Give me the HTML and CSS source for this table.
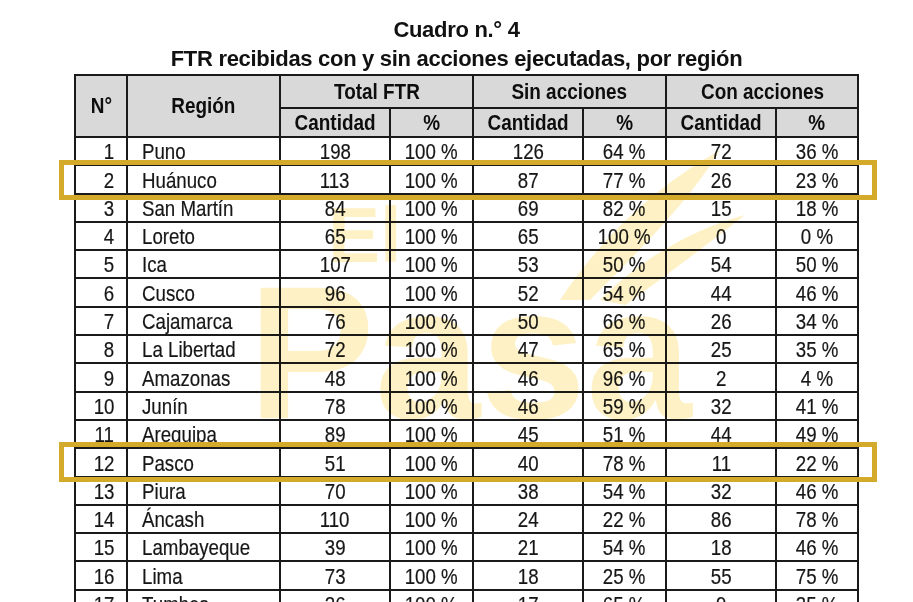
FILE: index.html
```html
<!DOCTYPE html>
<html lang="es">
<head>
<meta charset="utf-8">
<title>Cuadro n.° 4</title>
<link rel="stylesheet" href="styles.css">
</head>
<body>
<div class="page">
  <div class="titles">
    <div class="title">Cuadro n.° 4</div>
    <div class="subtitle">FTR recibidas con y sin acciones ejecutadas, por región</div>
  </div>
  <table class="grid">
    <colgroup>
      <col class="c-n"><col class="c-reg"><col class="c-q"><col class="c-p"><col class="c-q"><col class="c-p"><col class="c-q"><col class="c-p2">
    </colgroup>
    <thead>
      <tr class="h1">
        <th rowspan="2"><span>N°</span></th>
        <th rowspan="2"><span>Región</span></th>
        <th colspan="2"><span>Total FTR</span></th>
        <th colspan="2"><span>Sin acciones</span></th>
        <th colspan="2"><span>Con acciones</span></th>
      </tr>
      <tr class="h2">
        <th><span>Cantidad</span></th><th><span>%</span></th><th><span>Cantidad</span></th><th><span>%</span></th><th><span>Cantidad</span></th><th><span>%</span></th>
      </tr>
    </thead>
    <tbody>
      <tr><td class="n"><span>1</span></td><td class="r"><span>Puno</span></td><td><span>198</span></td><td><span>100 %</span></td><td><span>126</span></td><td><span>64 %</span></td><td><span>72</span></td><td><span>36 %</span></td></tr>
      <tr><td class="n"><span>2</span></td><td class="r"><span>Huánuco</span></td><td><span>113</span></td><td><span>100 %</span></td><td><span>87</span></td><td><span>77 %</span></td><td><span>26</span></td><td><span>23 %</span></td></tr>
      <tr><td class="n"><span>3</span></td><td class="r"><span>San Martín</span></td><td><span>84</span></td><td><span>100 %</span></td><td><span>69</span></td><td><span>82 %</span></td><td><span>15</span></td><td><span>18 %</span></td></tr>
      <tr><td class="n"><span>4</span></td><td class="r"><span>Loreto</span></td><td><span>65</span></td><td><span>100 %</span></td><td><span>65</span></td><td><span>100 %</span></td><td><span>0</span></td><td><span>0 %</span></td></tr>
      <tr><td class="n"><span>5</span></td><td class="r"><span>Ica</span></td><td><span>107</span></td><td><span>100 %</span></td><td><span>53</span></td><td><span>50 %</span></td><td><span>54</span></td><td><span>50 %</span></td></tr>
      <tr><td class="n"><span>6</span></td><td class="r"><span>Cusco</span></td><td><span>96</span></td><td><span>100 %</span></td><td><span>52</span></td><td><span>54 %</span></td><td><span>44</span></td><td><span>46 %</span></td></tr>
      <tr><td class="n"><span>7</span></td><td class="r"><span>Cajamarca</span></td><td><span>76</span></td><td><span>100 %</span></td><td><span>50</span></td><td><span>66 %</span></td><td><span>26</span></td><td><span>34 %</span></td></tr>
      <tr><td class="n"><span>8</span></td><td class="r"><span>La Libertad</span></td><td><span>72</span></td><td><span>100 %</span></td><td><span>47</span></td><td><span>65 %</span></td><td><span>25</span></td><td><span>35 %</span></td></tr>
      <tr><td class="n"><span>9</span></td><td class="r"><span>Amazonas</span></td><td><span>48</span></td><td><span>100 %</span></td><td><span>46</span></td><td><span>96 %</span></td><td><span>2</span></td><td><span>4 %</span></td></tr>
      <tr><td class="n"><span>10</span></td><td class="r"><span>Junín</span></td><td><span>78</span></td><td><span>100 %</span></td><td><span>46</span></td><td><span>59 %</span></td><td><span>32</span></td><td><span>41 %</span></td></tr>
      <tr><td class="n"><span>11</span></td><td class="r"><span>Arequipa</span></td><td><span>89</span></td><td><span>100 %</span></td><td><span>45</span></td><td><span>51 %</span></td><td><span>44</span></td><td><span>49 %</span></td></tr>
      <tr><td class="n"><span>12</span></td><td class="r"><span>Pasco</span></td><td><span>51</span></td><td><span>100 %</span></td><td><span>40</span></td><td><span>78 %</span></td><td><span>11</span></td><td><span>22 %</span></td></tr>
      <tr><td class="n"><span>13</span></td><td class="r"><span>Piura</span></td><td><span>70</span></td><td><span>100 %</span></td><td><span>38</span></td><td><span>54 %</span></td><td><span>32</span></td><td><span>46 %</span></td></tr>
      <tr><td class="n"><span>14</span></td><td class="r"><span>Áncash</span></td><td><span>110</span></td><td><span>100 %</span></td><td><span>24</span></td><td><span>22 %</span></td><td><span>86</span></td><td><span>78 %</span></td></tr>
      <tr><td class="n"><span>15</span></td><td class="r"><span>Lambayeque</span></td><td><span>39</span></td><td><span>100 %</span></td><td><span>21</span></td><td><span>54 %</span></td><td><span>18</span></td><td><span>46 %</span></td></tr>
      <tr><td class="n"><span>16</span></td><td class="r"><span>Lima</span></td><td><span>73</span></td><td><span>100 %</span></td><td><span>18</span></td><td><span>25 %</span></td><td><span>55</span></td><td><span>75 %</span></td></tr>
      <tr><td class="n"><span>17</span></td><td class="r"><span>Tumbes</span></td><td><span>26</span></td><td><span>100 %</span></td><td><span>17</span></td><td><span>65 %</span></td><td><span>9</span></td><td><span>35 %</span></td></tr>
    </tbody>
  </table>

  <svg class="watermark" width="913" height="602" viewBox="0 0 913 602" aria-hidden="true">
    <g fill="#f8cf3c">
      <text x="328" y="262" class="wm-el">El</text>
      <text x="248" y="418" class="wm-big">Pasa</text>
      <path d="M560 300 C600 240 650 190 720 150 C690 200 640 250 590 300 Z"/>
      <path d="M600 300 C640 260 690 230 745 215 C700 250 660 280 625 305 Z"/>
    </g>
  </svg>

  <div class="mark mark-1"></div>
  <div class="mark mark-2"></div>
</div>
</body>
</html>
```

FILE: styles.css
```css
html, body {
  margin: 0;
  padding: 0;
  background: #ffffff;
}

.page {
  position: relative;
  width: 913px;
  height: 602px;
  overflow: hidden;
  font-family: "Liberation Sans", Arial, sans-serif;
  color: #1e1e1e;
}

.titles {
  display: flex;
  flex-direction: column;
  align-items: center;
  padding-top: 15px;
  font-weight: bold;
  font-size: 22px;
  line-height: 29px;
  letter-spacing: -0.3px;
  color: #111;
}

.grid {
  margin-left: 74px;
  margin-top: 1px;
  border-collapse: collapse;
  table-layout: fixed;
  width: 783px;
  font-size: 22px;
}

.c-n { width: 52px; }
.c-reg { width: 153px; }
.c-q { width: 110px; }
.c-p { width: 83px; }
.c-p2 { width: 82px; }

.grid th,
.grid td {
  border: 2px solid #1a1a1a;
  padding: 0;
  line-height: 24px;
  white-space: nowrap;
  overflow: hidden;
}

.grid th span,
.grid td span {
  display: inline-block;
  transform: scaleX(0.85);
  transform-origin: center;
}

.grid th span {
  transform: scaleX(0.86);
}

.grid th {
  background: #d9d9d9;
  font-weight: bold;
  color: #0d0d0d;
  text-align: center;
}

.h1 th { height: 31px; }
.h2 th { height: 27px; }

.grid td {
  height: 26.3px;
  text-align: center;
  vertical-align: bottom;
  color: #161616;
  -webkit-text-stroke: 0.2px #161616;
}

.grid td.n {
  text-align: right;
  padding-right: 12px;
}

.grid td.n span {
  transform-origin: right center;
}

.grid td.r {
  text-align: left;
  padding-left: 14px;
}

.grid td.r span {
  transform-origin: left center;
}

.watermark {
  position: absolute;
  left: 0;
  top: 0;
  pointer-events: none;
  mix-blend-mode: multiply;
  opacity: 0.3;
}

.wm-el {
  font-family: "Liberation Sans", Arial, sans-serif;
  font-weight: bold;
  font-size: 78px;
}

.wm-big {
  font-family: "Liberation Sans", Arial, sans-serif;
  font-weight: bold;
  font-size: 190px;
}

.mark {
  position: absolute;
  left: 59px;
  width: 808px;
  border: 5px solid #d3aa29;
  pointer-events: none;
}

.mark-1 { top: 160px; height: 30px; }
.mark-2 { top: 442px; height: 30px; }
```
